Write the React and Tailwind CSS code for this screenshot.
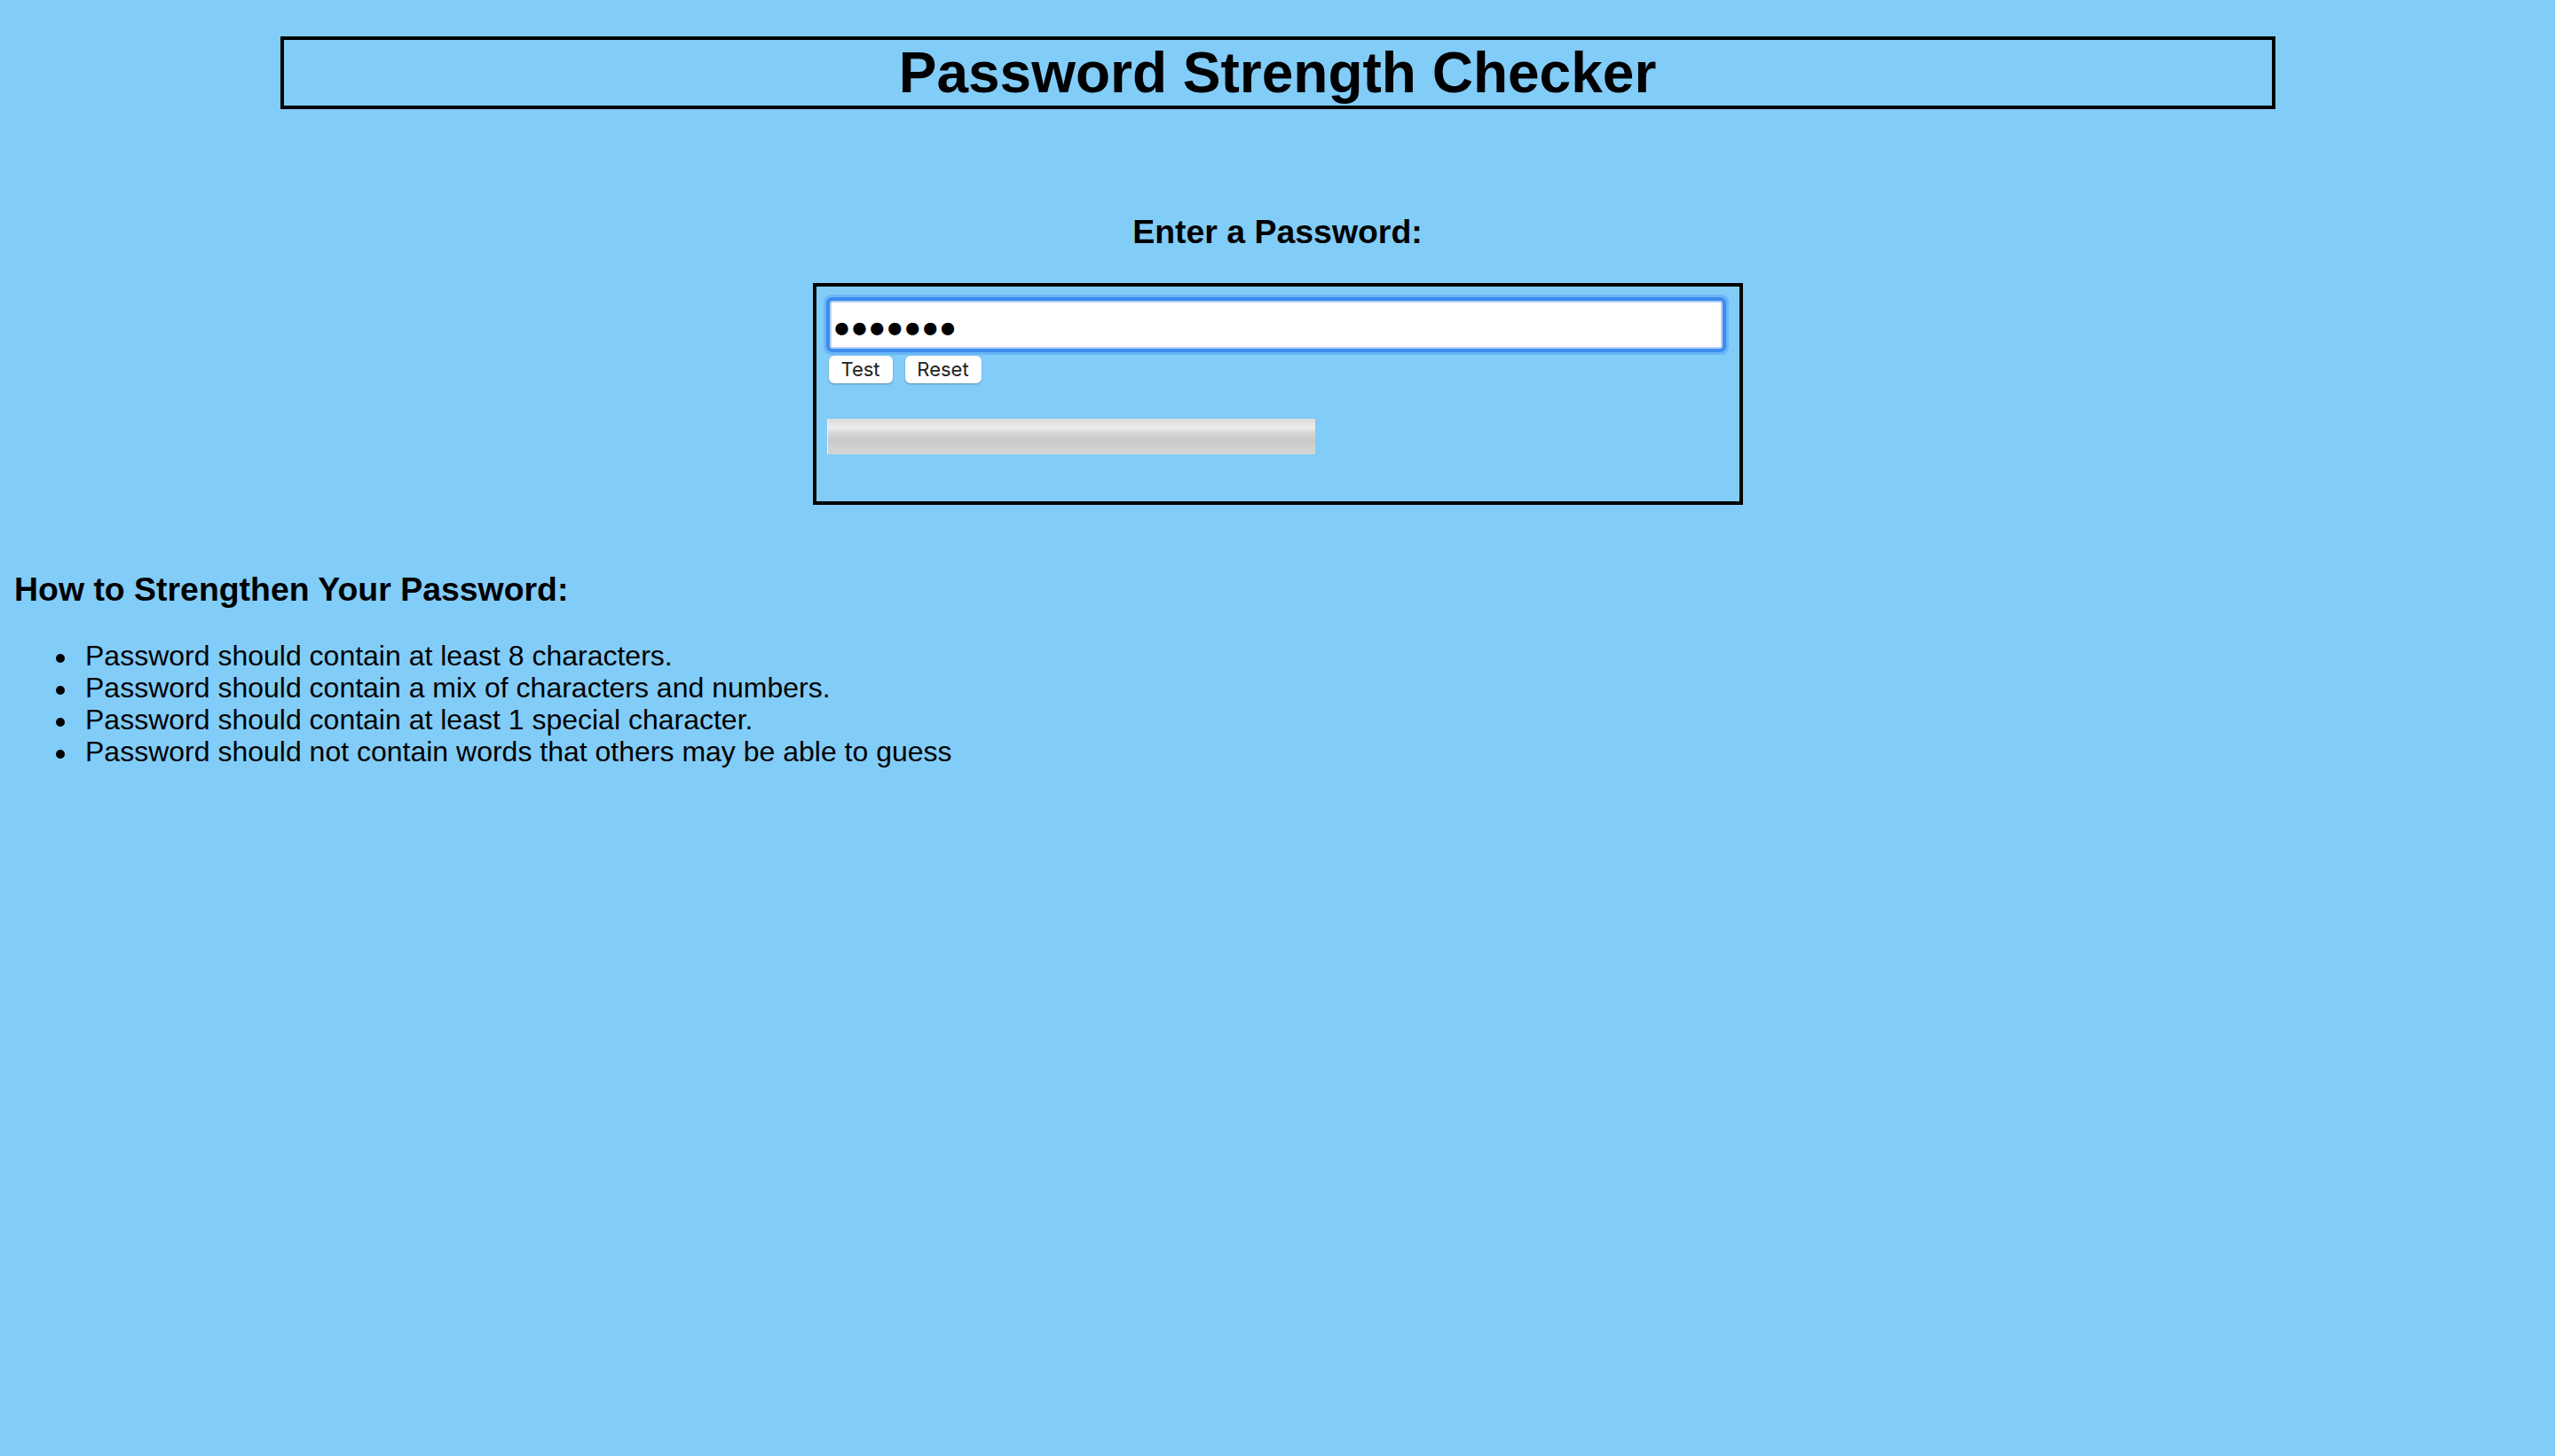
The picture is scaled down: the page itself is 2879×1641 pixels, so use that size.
import { useState } from 'react';

const tips = [
  'Password should contain at least 8 characters.',
  'Password should contain a mix of characters and numbers.',
  'Password should contain at least 1 special character.',
  'Password should not contain words that others may be able to guess',
];

export default function App() {
  const [value, setValue] = useState('●●●●●●●');

  return (
    <div className="min-h-screen bg-[#82ccf8] pt-[41px] font-['Liberation_Sans',Arial,sans-serif] text-black">
      <h1 className="mx-auto w-[2248px] border-4 border-black pt-[2px] text-center text-[64px] font-bold leading-[71.5px]">
        Password Strength Checker
      </h1>

      <h3 className="mt-[117px] text-center text-[37.44px] font-bold leading-[43px]">Enter a Password:</h3>

      <div className="mx-auto mt-[36px] w-[1048px] border-4 border-black pt-[16px] pb-[53px]">
        <input
          type="text"
          value={value}
          onChange={(e) => setValue(e.target.value)}
          className="ml-[15px] block h-[54px] w-[1006px] rounded-[3px] border-2 border-[#b6d0f6] bg-white px-[2px] pt-[6px] text-[33px] leading-none text-black outline-none shadow-[0_0_0_4px_#3c8cf0,0_0_0_7px_rgba(60,140,240,0.35)]"
        />

        <div className="mt-[8px] ml-[14px] flex gap-[14px]">
          <button
            type="button"
            className="h-[31px] w-[72px] rounded-[6px] bg-white font-['Inter',sans-serif] text-[22px] leading-none text-[#222] shadow-[0_1px_2px_rgba(0,0,0,0.3)]"
          >
            Test
          </button>
          <button
            type="button"
            onClick={() => setValue('')}
            className="h-[31px] w-[86px] rounded-[6px] bg-white font-['Inter',sans-serif] text-[22px] leading-none text-[#222] shadow-[0_1px_2px_rgba(0,0,0,0.3)]"
          >
            Reset
          </button>
        </div>

        <div className="mt-[40px] ml-[12px] h-[40px] w-[550px] border-l border-[#f0f0f0] bg-[linear-gradient(to_bottom,#dcdcdc_0%,#ececec_25%,#d2d2d2_45%,#cacaca_60%,#d6d6d6_100%)]" />
      </div>

      <h3 className="mt-[74px] pl-[16px] text-[37.44px] font-bold leading-[43px]">How to Strengthen Your Password:</h3>

      <ul className="mt-[35px] pl-[96px] text-[32px] leading-[36px]">
        {tips.map((tip) => (
          <li
            key={tip}
            className="relative before:absolute before:left-[-33px] before:top-[16px] before:h-[10px] before:w-[10px] before:rounded-full before:bg-black before:content-['']"
          >
            {tip}
          </li>
        ))}
      </ul>
    </div>
  );
}
